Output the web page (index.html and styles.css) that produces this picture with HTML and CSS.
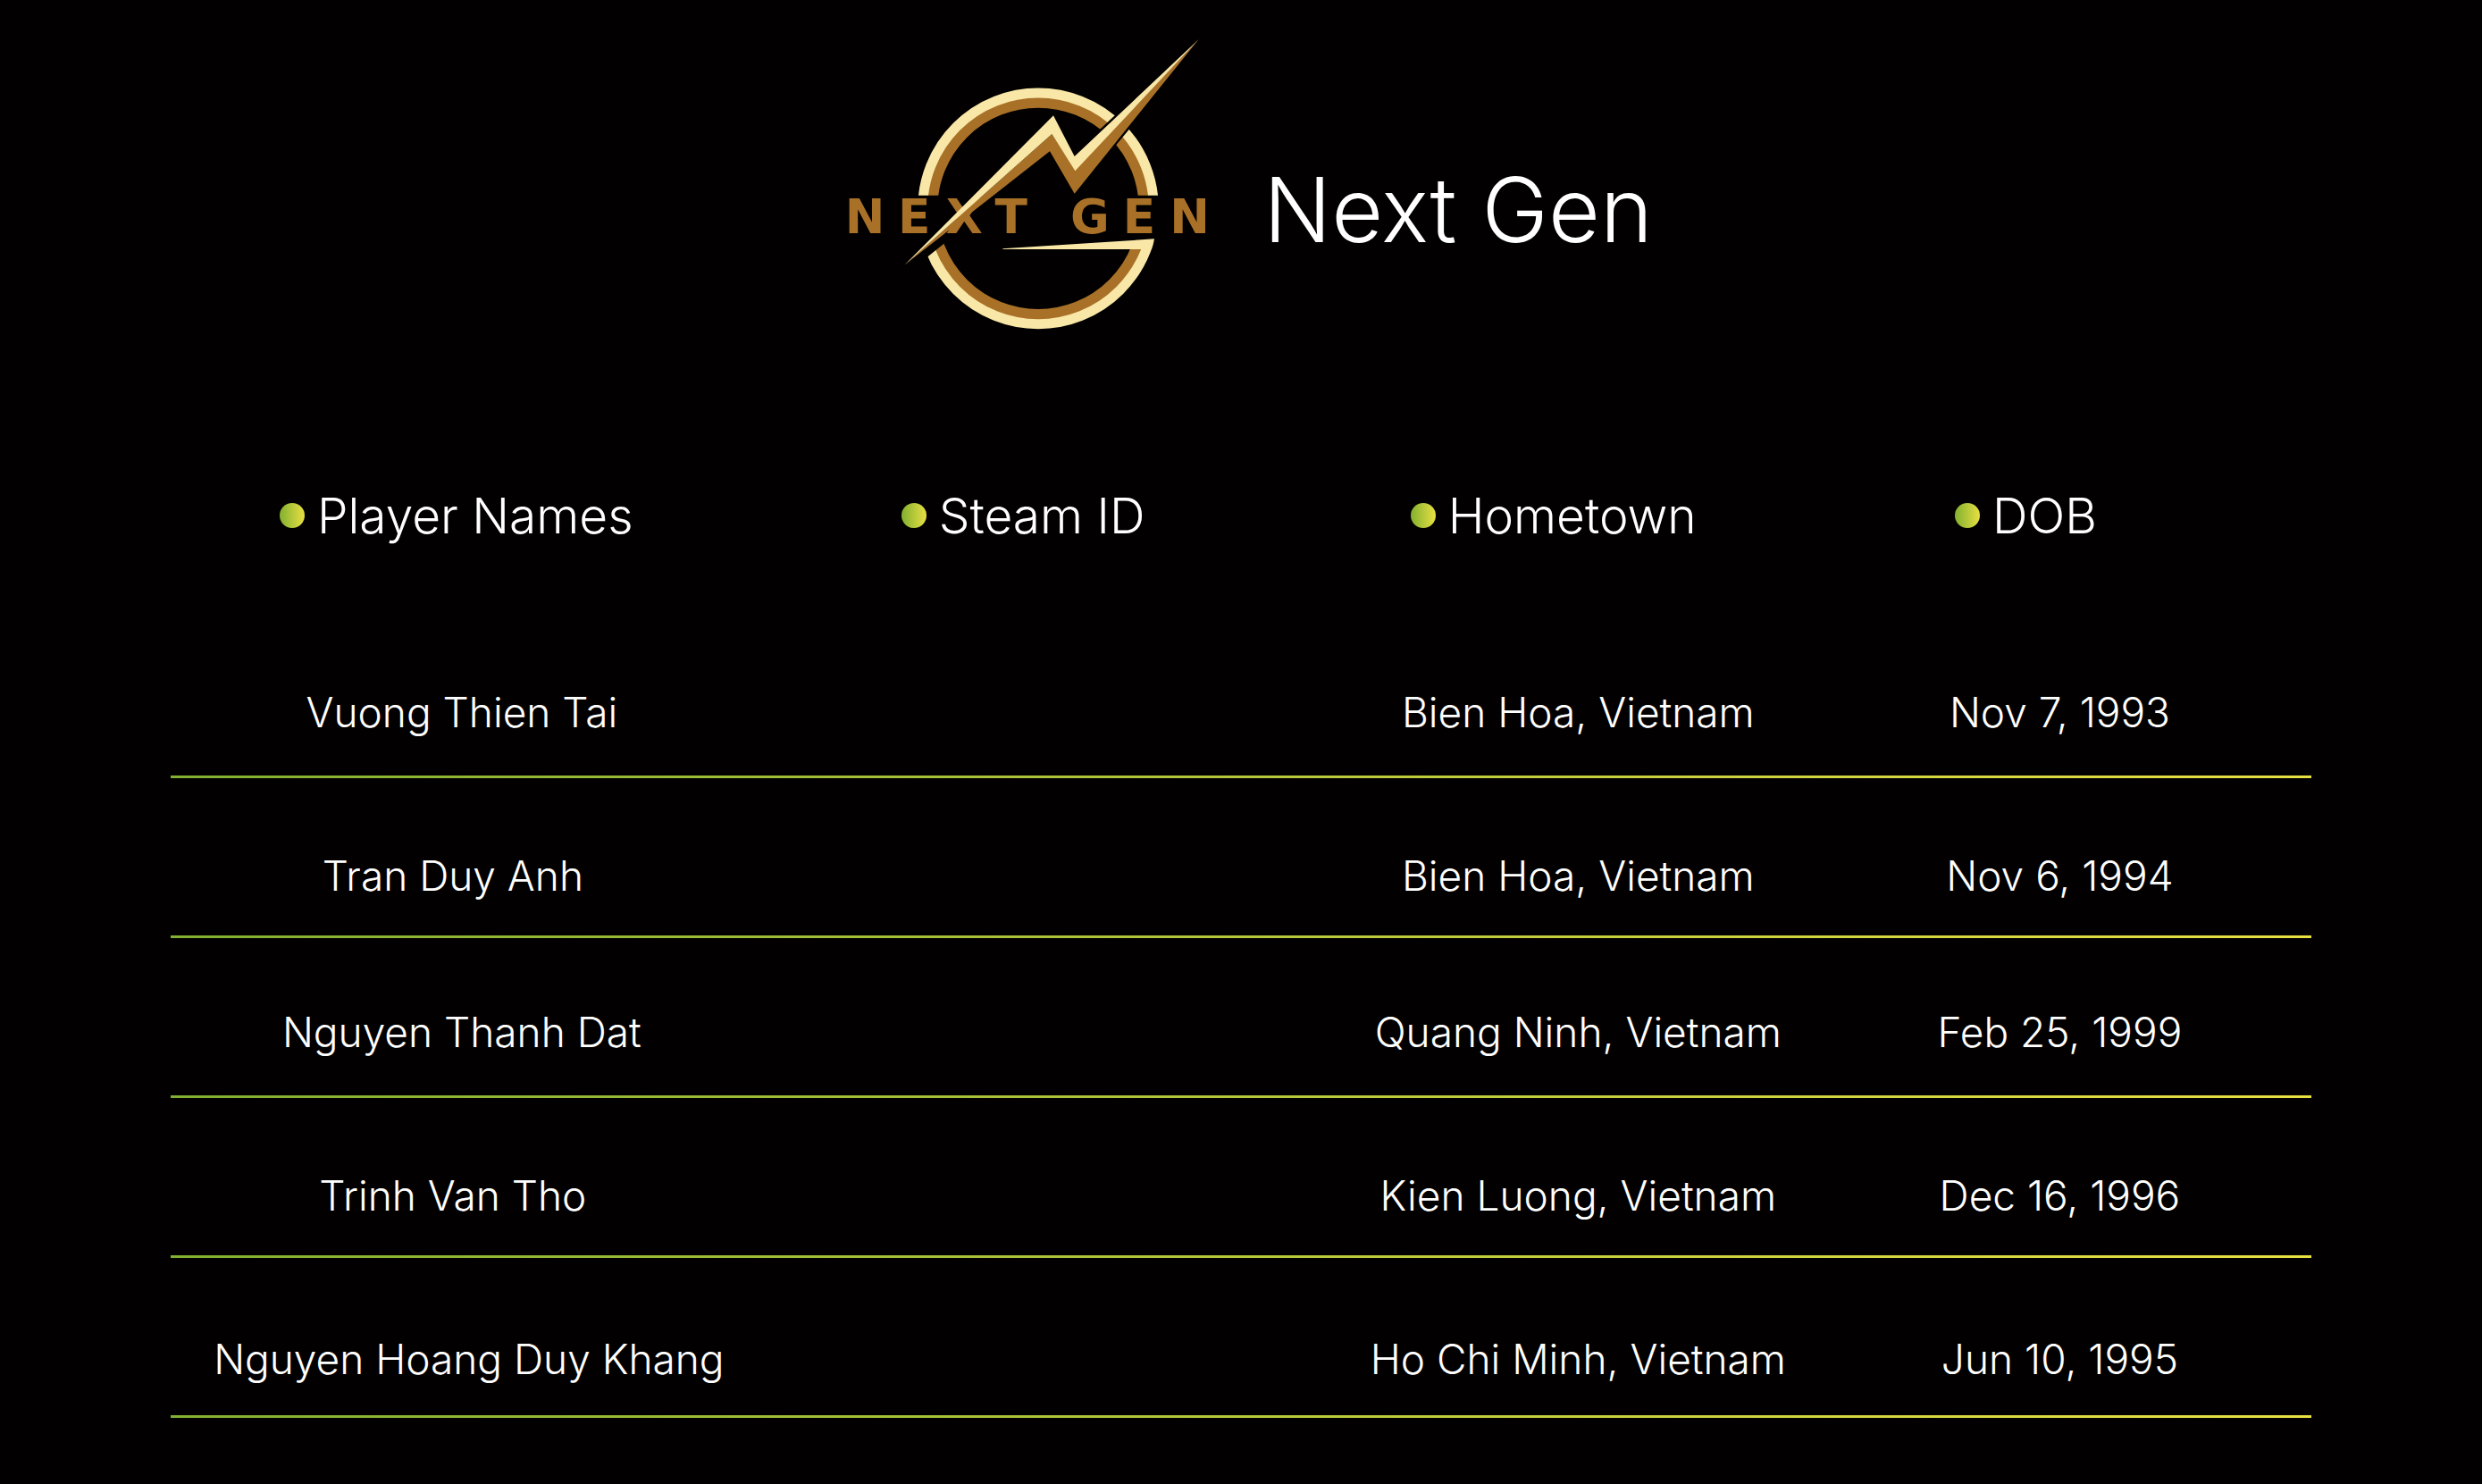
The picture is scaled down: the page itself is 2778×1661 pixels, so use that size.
FILE: index.html
```html
<!DOCTYPE html>
<html lang="en">
<head>
<meta charset="utf-8">
<meta name="viewport" content="width=device-width, initial-scale=1">
<title>Next Gen</title>
<link rel="stylesheet" href="styles.css">
</head>
<body>
<main class="page">
  <header class="team">
    <svg class="logo" viewBox="0 0 1380 1110" role="img" aria-label="Next Gen logo">
      <defs>
        <clipPath id="ring-gaps">
          <polygon points="0,0 1332,0 984,327 935,373 800,500 726,596 0,596"/>
          <polygon points="1030,376 1150,232 1380,232 1380,596 900,596 900,532"/>
          <polygon points="200,926 416,753 500,776 1380,776 1380,1110 200,1110"/>
        </clipPath>
      </defs>
      <!-- two-tone ring, broken by the bolt and the wordmark -->
      <g clip-path="url(#ring-gaps)" fill="none">
        <circle class="ring-inner" cx="726" cy="640" r="356"/>
        <circle class="ring-outer" cx="726" cy="640" r="388"/>
      </g>
      <path class="cream" d="M607 775L1116 742Q1114 757 1107 777H607z"/>
      <text class="wordmark" y="723" x="144 310 478 635 770 900 1065 1235">NEXT GEN</text>
      <!-- bolt -->
      <path class="bronze" d="M277 830L772 390L850 510L1265 72L848 590L765 448z"/>
      <path class="cream" d="M277 830L777 328L848 465L1265 72L850 514L772 390z"/>
    </svg>
    <h1 class="team-name">Next Gen</h1>
  </header>

  <table class="roster">
    <colgroup>
      <col class="col-name"><col class="col-steam"><col class="col-home"><col class="col-dob">
    </colgroup>
    <thead>
      <tr>
        <th scope="col" class="head-name"><span class="label">Player Names</span></th>
        <th scope="col" class="head-steam"><span class="label">Steam ID</span></th>
        <th scope="col" class="head-home"><span class="label">Hometown</span></th>
        <th scope="col" class="head-dob"><span class="label">DOB</span></th>
      </tr>
    </thead>
    <tbody>
      <tr><td>Vuong Thien Tai</td><td></td><td>Bien Hoa, Vietnam</td><td>Nov 7, 1993</td></tr>
      <tr class="snug"><td>Tran Duy Anh</td><td></td><td>Bien Hoa, Vietnam</td><td>Nov 6, 1994</td></tr>
      <tr><td>Nguyen Thanh Dat</td><td></td><td>Quang Ninh, Vietnam</td><td>Feb 25, 1999</td></tr>
      <tr class="snug"><td>Trinh Van Tho</td><td></td><td>Kien Luong, Vietnam</td><td>Dec 16, 1996</td></tr>
      <tr class="last"><td>Nguyen Hoang Duy Khang</td><td></td><td>Ho Chi Minh, Vietnam</td><td>Jun 10, 1995</td></tr>
    </tbody>
  </table>
</main>
</body>
</html>
```
FILE: styles.css
```css
:root {
  --green: #82b030;
  --yellow: #e8e043;
  --bronze: #a97128;
  --cream: #f8e7a7;
}

body {
  margin: 0;
  background: #020000;
  color: #fff;
  font-family: Inter, "Liberation Sans", sans-serif;
  font-weight: 300;
}

.page {
  padding: 20px 191px 74px;
}

.team {
  display: flex;
  justify-content: center;
  align-items: center;
  gap: 34px;
  padding-right: 8px;
}

.logo {
  flex: none;
  width: 460px;
  height: 370px;
}

.ring-inner { stroke: var(--bronze); stroke-width: 36; }
.ring-outer { stroke: var(--cream); stroke-width: 33; }
.bronze { fill: var(--bronze); }
.cream { fill: var(--cream); }

.wordmark {
  fill: var(--bronze);
  font-family: "DejaVu Sans", sans-serif;
  font-size: 160px;
  font-weight: 700;
  text-anchor: middle;
}

.team-name {
  margin: 0;
  padding-top: 60px;
  font-size: 100px;
  line-height: 120px;
  font-weight: 300;
}

.roster {
  width: 100%;
  table-layout: fixed;
  border-collapse: collapse;
}

.col-name { width: 27.2%; }
.col-steam { width: 27.8%; }
.col-home { width: 21.5%; }
.col-dob { width: 23.5%; }

th {
  padding: 153px 0 81px;
  font-size: 55px;
  line-height: 68px;
  font-weight: 300;
  text-align: left;
  white-space: nowrap;
}

.head-name { padding-left: 122px; }
.head-steam { padding-left: 166px; }
.head-home { padding-left: 70px; }
.head-dob { padding-left: 164px; }

.label {
  display: flex;
  align-items: center;
  gap: 14px;
}

.label::before {
  content: "";
  width: 28px;
  height: 28px;
  border-radius: 50%;
  background: linear-gradient(90deg, var(--green), var(--yellow));
}

tbody tr {
  height: 179px;
  background: linear-gradient(90deg, var(--green), var(--yellow)) bottom / 100% 3px no-repeat;
}

td {
  padding: 0 0 46px;
  font-size: 46px;
  line-height: 56px;
  text-align: center;
  vertical-align: bottom;
  white-space: nowrap;
}

.snug td { padding-bottom: 42px; }
.snug td:first-child { padding-right: 20px; }
.last td { padding-bottom: 38px; }
.last td:first-child { padding-left: 16px; }
```
